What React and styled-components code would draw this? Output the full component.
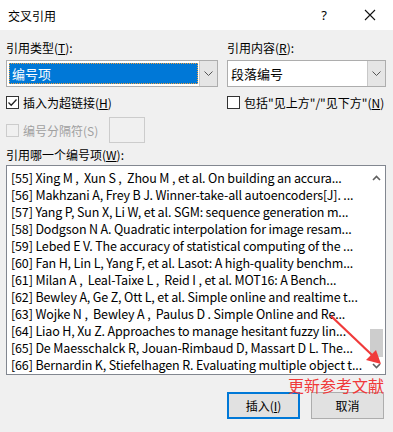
import React from 'react';
import styled, { createGlobalStyle } from 'styled-components';

const GlobalStyle = createGlobalStyle`
  html, body {
    margin: 0;
    padding: 0;
    background: #ffffff;
  }
  body {
    font-family: "Noto Sans CJK SC", "Noto Sans", sans-serif;
    font-size: 12px;
    color: #000;
  }
`;

const refs = [
  '[55] Xing M\u00a0,\u00a0 Xun S\u00a0,\u00a0 Zhou M\u00a0, et al. On building an accura...',
  '[56] Makhzani A, Frey B J. Winner-take-all autoencoders[J]. ...',
  '[57] Yang P, Sun X, Li W, et al. SGM: sequence generation m...',
  '[58] Dodgson N A. Quadratic interpolation for image resam...',
  '[59] Lebed E V. The accuracy of statistical computing of the ...',
  '[60] Fan H, Lin L, Yang F, et al. Lasot: A high-quality benchm...',
  '[61] Milan A\u00a0,\u00a0 Leal-Taixe L\u00a0,\u00a0 Reid I\u00a0, et al. MOT16: A Bench...',
  '[62] Bewley A, Ge Z, Ott L, et al. Simple online and realtime t...',
  '[63] Wojke N\u00a0,\u00a0 Bewley A\u00a0,\u00a0 Paulus D\u00a0. Simple Online and Re...',
  '[64] Liao H, Xu Z. Approaches to manage hesitant fuzzy lin...',
  '[65] De Maesschalck R, Jouan-Rimbaud D, Massart D L. The...',
  '[66] Bernardin K, Stiefelhagen R. Evaluating multiple object t...',
];

function Chevron({ up }) {
  return (
    <svg width="9" height="6" viewBox="0 0 9 6">
      <path
        d={up ? 'M1 5 L4.5 1.5 L8 5' : 'M1 1 L4.5 4.5 L8 1'}
        fill="none"
        stroke="#606060"
        strokeWidth="1.6"
      />
    </svg>
  );
}

function ComboArrow() {
  return (
    <svg width="9" height="5" viewBox="0 0 9 5">
      <path d="M0.5 0.5 L4.5 4.5 L8.5 0.5" fill="none" stroke="#555" strokeWidth="1" />
    </svg>
  );
}

function Check() {
  return (
    <svg width="11" height="11" viewBox="0 0 11 11">
      <path d="M1.5 5.5 L4.2 8.2 L9.5 2.5" fill="none" stroke="#222" strokeWidth="1.3" />
    </svg>
  );
}

function App() {
  return (
    <>
      <GlobalStyle />
      <Dialog>
        <TitleBar>
          <Title>交叉引用</Title>
          <TitleButtons>
            <HelpMark>?</HelpMark>
            <CloseMark>
              <svg width="12" height="12" viewBox="0 0 12 12">
                <path d="M1 1 L11 11 M11 1 L1 11" stroke="#111" strokeWidth="1.1" />
              </svg>
            </CloseMark>
          </TitleButtons>
        </TitleBar>
        <Body>
          <Columns>
            <Column>
              <Label>引用类型(<u>T</u>):</Label>
              <Combo>
                <ComboValue $selected>
                  <SelectedText>编号项</SelectedText>
                </ComboValue>
                <ComboButton><ComboArrow /></ComboButton>
              </Combo>
              <CheckRow>
                <Box><Check /></Box>
                <span>插入为超链接(<u>H</u>)</span>
              </CheckRow>
              <SeparatorRow>
                <CheckRow $disabled>
                  <Box $disabled />
                  <span>编号分隔符(S)</span>
                </CheckRow>
                <SmallInput />
              </SeparatorRow>
            </Column>
            <Column>
              <Label>引用内容(<u>R</u>):</Label>
              <Combo>
                <ComboValue>段落编号</ComboValue>
                <ComboButton><ComboArrow /></ComboButton>
              </Combo>
              <CheckRow>
                <Box />
                <span>包括"见上方"/"见下方"(<u>N</u>)</span>
              </CheckRow>
            </Column>
          </Columns>
          <ListLabel>引用哪一个编号项(<u>W</u>):</ListLabel>
          <ListBox>
            <Items>
              {refs.map((r) => (
                <Item key={r}>{r}</Item>
              ))}
            </Items>
            <ScrollBar>
              <ScrollArrow $top><Chevron up /></ScrollArrow>
              <Track>
                <Thumb />
              </Track>
              <ScrollArrow><Chevron /></ScrollArrow>
            </ScrollBar>
          </ListBox>
          <Footer>
            <Button $primary>插入(<u>I</u>)</Button>
            <Button>取消</Button>
          </Footer>
        </Body>
        <Annotation>
          <svg width="393" height="432" viewBox="0 0 393 432">
            <line x1="331" y1="316" x2="372" y2="355" stroke="#f03a3a" strokeWidth="2.2" />
            <polygon points="381,364 366,360 376,350" fill="#f03a3a" />
          </svg>
        </Annotation>
        <Note>更新参考文献</Note>
      </Dialog>
    </>
  );
}

export default App;

const Dialog = styled.div`
  position: relative;
  width: 393px;
  height: 432px;
  display: flex;
  flex-direction: column;
  overflow: hidden;
`;

const TitleBar = styled.div`
  height: 30px;
  flex: none;
  background: #ffffff;
  display: flex;
  align-items: center;
  justify-content: space-between;
  padding-left: 8px;
`;

const Title = styled.div`
  font-size: 12px;
  margin-top: 1px;
`;

const TitleButtons = styled.div`
  display: flex;
  align-items: center;
  height: 100%;
`;

const HelpMark = styled.div`
  width: 46px;
  text-align: center;
  font-family: "Noto Sans", sans-serif;
  font-size: 13px;
  margin-left: -20px;
`;

const CloseMark = styled.div`
  width: 46px;
  display: flex;
  justify-content: center;
  align-items: center;
`;

const Body = styled.div`
  flex: 1;
  background: #f0f0f0;
  padding: 0 7px 0 6px;
  display: flex;
  flex-direction: column;
`;

const Columns = styled.div`
  display: grid;
  grid-template-columns: 212px 159px;
  column-gap: 9px;
`;

const Column = styled.div`
  display: flex;
  flex-direction: column;
`;

const Label = styled.div`
  margin-top: 10px;
  height: 16px;
  line-height: 16px;
  font-size: 12px;
  white-space: nowrap;
`;

const Combo = styled.div`
  margin-top: 4px;
  height: 27px;
  box-sizing: border-box;
  border: 1px solid #adadad;
  background: #ffffff;
  display: flex;
`;

const ComboValue = styled.div`
  flex: 1;
  padding: ${(p) => (p.$selected ? '2px 1px 2px 2px' : '0 0 0 3px')};
  display: flex;
  align-items: center;
  font-size: 13px;
`;

const SelectedText = styled.div`
  flex: 1;
  height: 100%;
  box-sizing: border-box;
  background: #0078d7;
  color: #ffffff;
  border: 1px dotted #f0a040;
  display: flex;
  align-items: center;
  padding-left: 2px;
`;

const ComboButton = styled.div`
  width: 17px;
  flex: none;
  background: #e5e5e5;
  border-left: 1px solid #c8c8c8;
  display: flex;
  align-items: center;
  justify-content: center;
`;

const CheckRow = styled.div`
  display: flex;
  align-items: center;
  gap: 4px;
  height: 14px;
  margin-top: 8px;
  font-size: 12px;
  white-space: nowrap;
  color: ${(p) => (p.$disabled ? '#a0a0a0' : '#000')};
`;

const Box = styled.div`
  width: 13px;
  height: 13px;
  box-sizing: border-box;
  border: 1px solid ${(p) => (p.$disabled ? '#cccccc' : '#333333')};
  background: ${(p) => (p.$disabled ? '#f0f0f0' : '#ffffff')};
  display: flex;
  align-items: center;
  justify-content: center;
  flex: none;
`;

const SeparatorRow = styled.div`
  display: flex;
  align-items: center;
  gap: 11px;
  margin-top: 8px;
  ${CheckRow} {
    margin-top: 0;
  }
`;

const SmallInput = styled.div`
  width: 36px;
  height: 26px;
  box-sizing: border-box;
  border: 1px solid #cccccc;
  background: #f0f0f0;
`;

const ListLabel = styled.div`
  margin-top: 4px;
  height: 16px;
  line-height: 16px;
  font-size: 12px;
`;

const ListBox = styled.div`
  margin-top: 2px;
  height: 210px;
  box-sizing: border-box;
  border: 1px solid #828790;
  background: #ffffff;
  display: flex;
`;

const Items = styled.div`
  flex: 1;
  min-width: 0;
  padding: 3px 0 0 4px;
  overflow: hidden;
`;

const Item = styled.div`
  height: 17px;
  line-height: 17px;
  font-size: 12.5px;
  letter-spacing: -0.15px;
  white-space: nowrap;
`;

const ScrollBar = styled.div`
  width: 17px;
  flex: none;
  background: #ffffff;
  display: flex;
  flex-direction: column;
`;

const ScrollArrow = styled.div`
  height: 17px;
  flex: none;
  display: flex;
  align-items: center;
  justify-content: center;
  margin-top: ${(p) => (p.$top ? '3px' : '0')};
`;

const Track = styled.div`
  flex: 1;
  display: flex;
  flex-direction: column;
  justify-content: flex-end;
  padding: 0 2px;
`;

const Thumb = styled.div`
  height: 28px;
  background: #cdcdcd;
`;

const Footer = styled.div`
  display: flex;
  justify-content: flex-end;
  gap: 11px;
  margin-top: 17px;
  padding-right: 2px;
`;

const Button = styled.div`
  width: 73px;
  height: 27px;
  box-sizing: border-box;
  border: ${(p) => (p.$primary ? '2px solid #0078d7' : '1px solid #adadad')};
  background: #e1e1e1;
  display: flex;
  align-items: center;
  justify-content: center;
  font-size: 12px;
`;

const Annotation = styled.div`
  position: absolute;
  inset: 0;
  pointer-events: none;
`;

const Note = styled.div`
  position: absolute;
  left: 288px;
  top: 377px;
  font-size: 16px;
  line-height: 17px;
  color: #f03a3a;
  white-space: nowrap;
`;
